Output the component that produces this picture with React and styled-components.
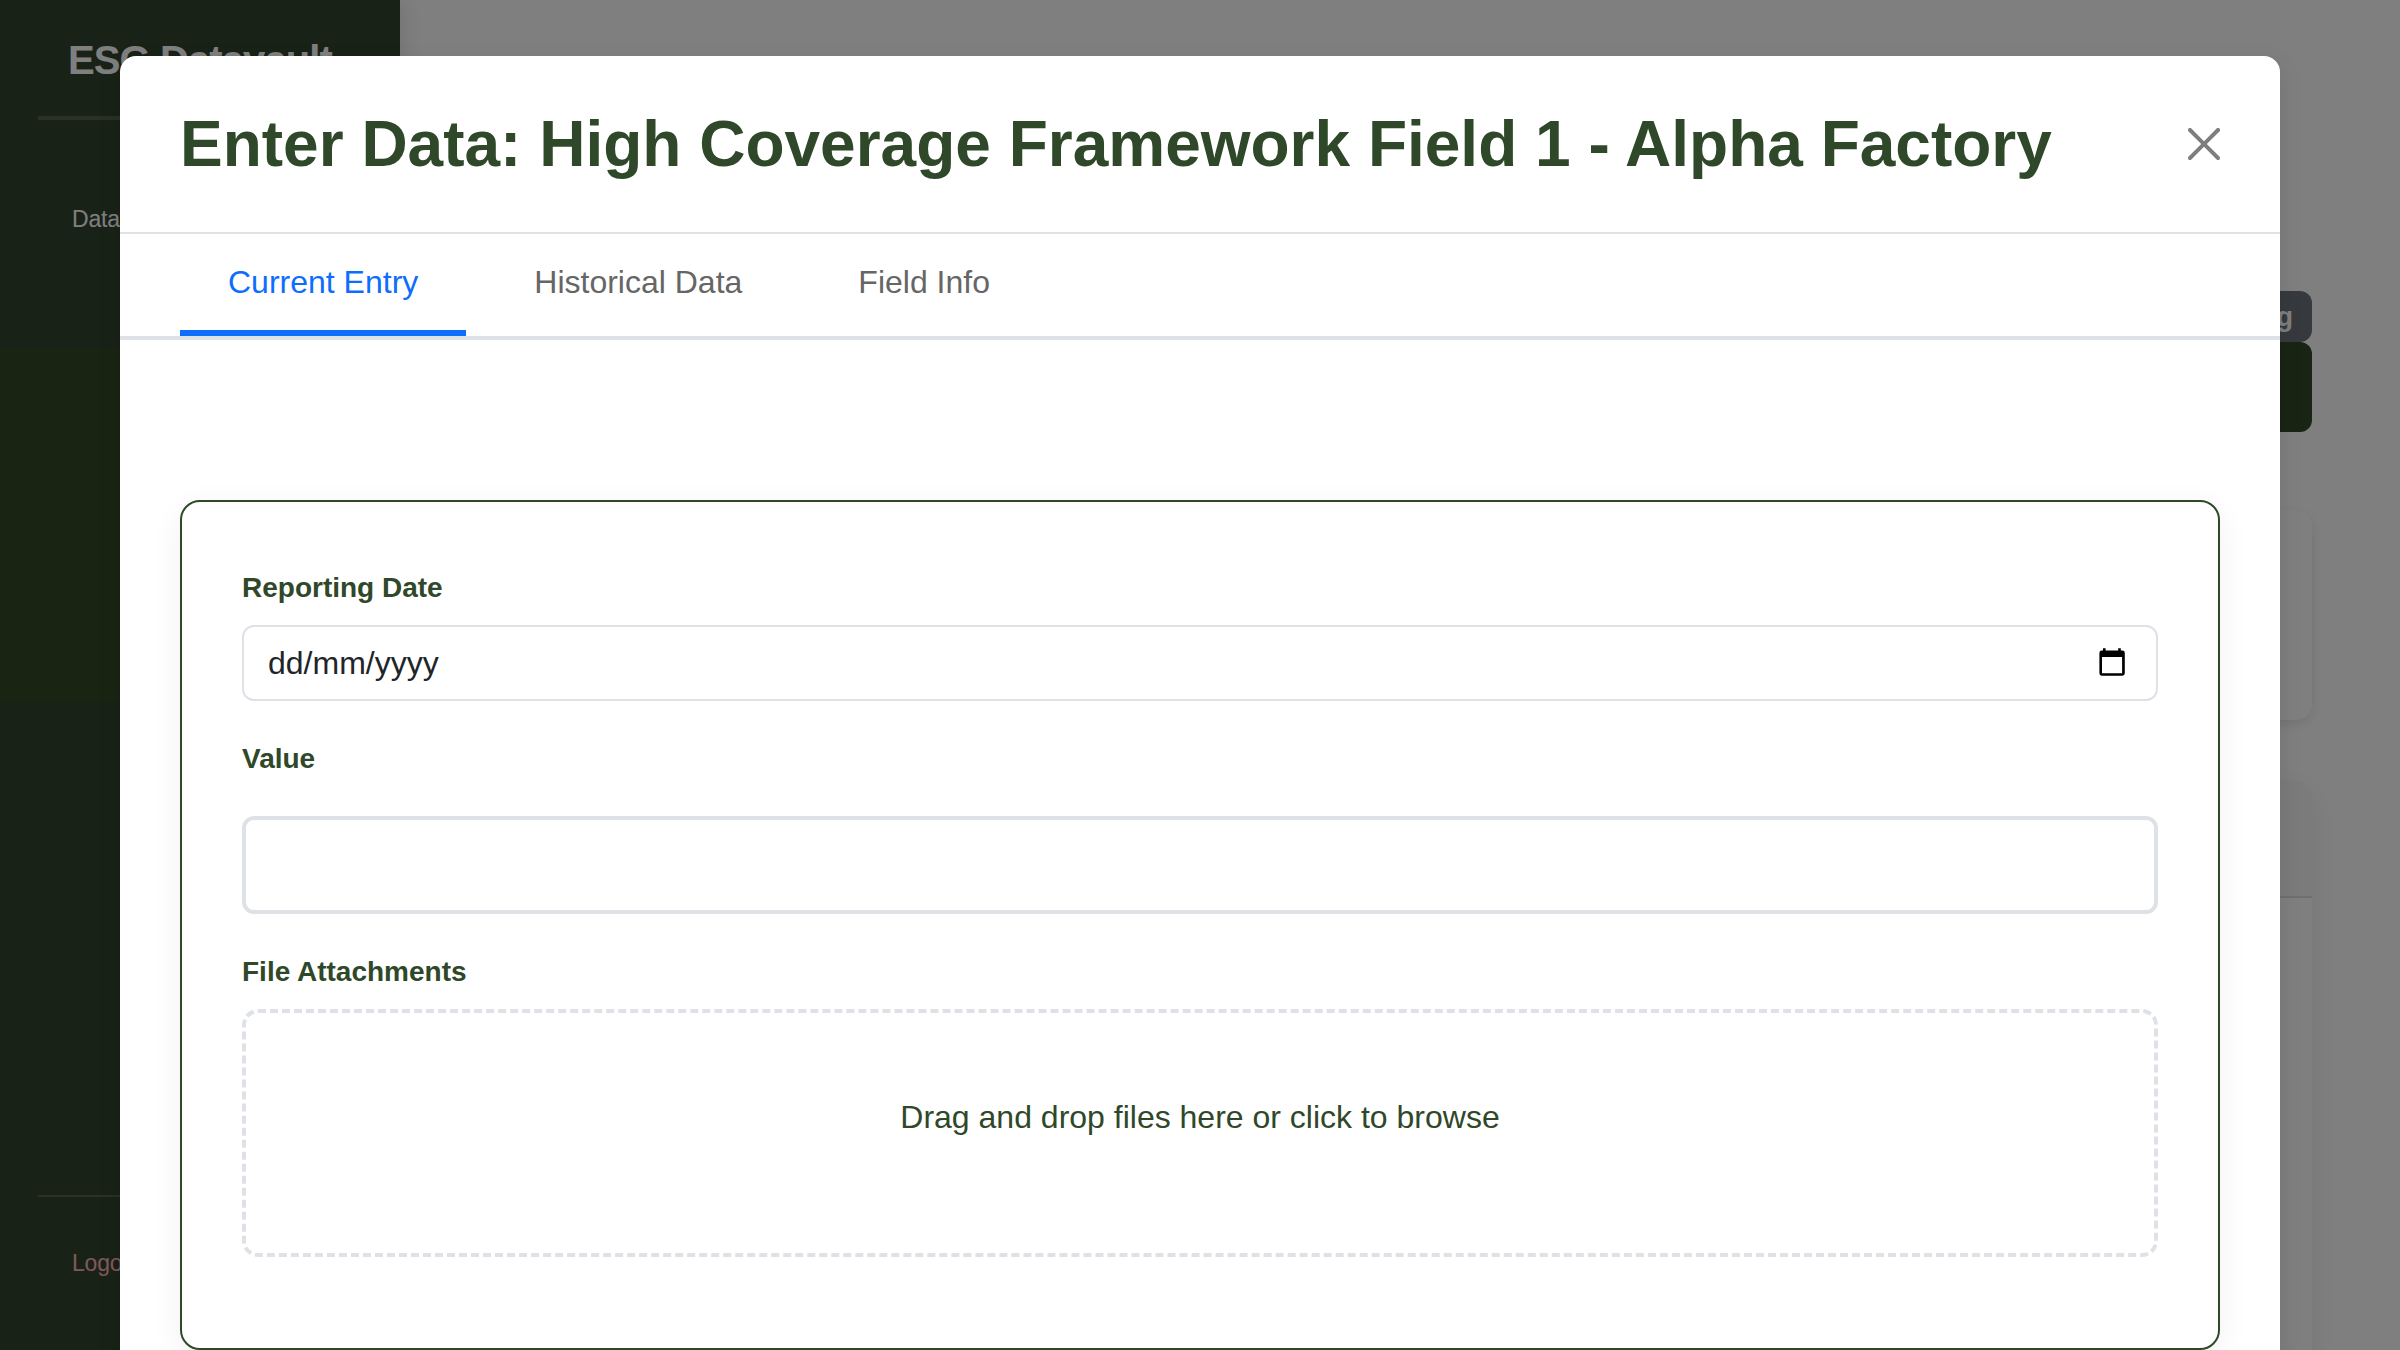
import React from 'react';
import styled, { createGlobalStyle } from 'styled-components';

const Global = createGlobalStyle`
  * { box-sizing: border-box; }
  body { margin: 0; overflow: hidden; font-family: "Liberation Sans", Arial, sans-serif; }
`;

const Page = styled.div`
  position: relative;
  display: flex;
  width: 2400px;
  height: 1350px;
  overflow: hidden;
  background: #fff;
`;

const Sidebar = styled.aside`
  display: flex;
  flex-direction: column;
  width: 400px;
  padding: 36px 38px 0;
  background: linear-gradient(#32442e 0 348px, #344826 348px 702px, #32442e 702px);
  color: #fff;
  box-shadow: 4px 0 20px rgba(0, 0, 0, 0.1);
`;

const Brand = styled.div`
  height: 84px;
  padding-left: 30px;
  border-bottom: 4px solid rgba(255, 255, 255, 0.16);
  font-size: 40px;
  font-weight: 700;
  letter-spacing: -0.9px;
  line-height: 48px;
  white-space: nowrap;
`;

const NavLink = styled.a`
  margin-top: 84px;
  padding-left: 34px;
  font-size: 23px;
  letter-spacing: -0.2px;
  line-height: 30px;
`;

const SidebarFooter = styled.div`
  height: 155px;
  margin-top: auto;
  padding: 51px 34px 0;
  border-top: 2px solid rgba(255, 255, 255, 0.16);
  color: #ffb3b3;
  font-size: 23px;
  letter-spacing: -0.2px;
  line-height: 30px;
`;

const Main = styled.main`
  display: flex;
  flex: 1;
  flex-direction: column;
  padding: 291px 88px 0 80px;

  & > * {
    flex-shrink: 0;
  }
`;

const StatusBadge = styled.span`
  align-self: flex-end;
  height: 51px;
  padding: 12px 19px 0;
  border-radius: 12px;
  background: #6c757d;
  color: #fff;
  font-size: 27px;
  font-weight: 700;
  line-height: 28px;
`;

const ActionButton = styled.button`
  align-self: flex-end;
  width: 220px;
  height: 90px;
  border: 0;
  border-radius: 12px;
  background: #344828;
`;

const SummaryCard = styled.section`
  height: 210px;
  margin-top: 78px;
  border-radius: 16px;
  background: #fff;
  box-shadow: 0 4px 12px rgba(0, 0, 0, 0.1);
`;

const TableCard = styled.section`
  height: 700px;
  margin-top: 60px;
  border-radius: 20px;
  background: #fff;
  box-shadow: 0 8px 32px rgba(0, 0, 0, 0.07);
`;

const TableHead = styled.div`
  height: 118px;
  border-bottom: 2px solid #dedede;
  border-radius: 20px 20px 0 0;
  background: #f7f7f7;
`;

const Backdrop = styled.div`
  position: absolute;
  inset: 0;
  display: flex;
  justify-content: center;
  align-items: flex-start;
  padding-top: 56px;
  background: rgba(0, 0, 0, 0.5);
`;

const Modal = styled.div`
  width: 2160px;
  height: 1400px;
  border-radius: 16px;
  background: #fff;
  box-shadow: 0 8px 24px rgba(0, 0, 0, 0.1);
`;

const ModalHeader = styled.header`
  display: flex;
  align-items: center;
  justify-content: space-between;
  height: 178px;
  padding: 0 60px;
  border-bottom: 2px solid #dee2e6;
`;

const Title = styled.h2`
  margin: 0;
  color: #2f4829;
  font-size: 64px;
  font-weight: 700;
  line-height: 76px;
  white-space: nowrap;
`;

const CloseButton = styled.button`
  display: flex;
  padding: 0;
  border: 0;
  background: none;
  opacity: 0.5;
`;

const Tabs = styled.nav`
  display: flex;
  gap: 20px;
  height: 106px;
  padding: 0 60px;
  border-bottom: 4px solid #dee2e6;
`;

const Tab = styled.button`
  padding: 24px 48px;
  border: 0;
  border-bottom: 6px solid ${(p) => (p.$active ? '#0d6efd' : 'transparent')};
  background: none;
  color: ${(p) => (p.$active ? '#0d6efd' : '#666')};
  font: 400 32px/48px "Liberation Sans", Arial, sans-serif;
`;

const FormCard = styled.form`
  display: flex;
  flex-direction: column;
  height: 850px;
  margin: 160px 60px 0;
  padding: 66px 60px 0;
  border: 2px solid #2f4829;
  border-radius: 20px;
  background: #fff;
  box-shadow: 0 8px 32px rgba(0, 0, 0, 0.06);
`;

const Label = styled.label`
  height: 40px;
  margin-top: ${(p) => p.$top || 0}px;
  color: #2f4829;
  font-size: 28px;
  font-weight: 700;
  line-height: 40px;
`;

const DateField = styled.div`
  display: flex;
  align-items: center;
  justify-content: space-between;
  height: 76px;
  margin-top: 17px;
  padding: 0 31px 0 24px;
  border: 2px solid #dee2e6;
  border-radius: 12px;
  color: #212529;
  font-size: 32px;
`;

const ValueInput = styled.input`
  height: 98px;
  margin-top: 37px;
  border: 4px solid #dee2e6;
  border-radius: 12px;
  background: #fff;
  outline: none;
`;

const DropZone = styled.div`
  height: 248px;
  margin-top: 17px;
  padding-top: 80px;
  border: 4px dashed #dee2e6;
  border-radius: 16px;
  color: #2f4829;
  font-size: 32px;
  line-height: 48px;
  text-align: center;
`;

const CalendarGlyph = styled.svg`
  margin-bottom: 2px;
`;

function CloseIcon() {
  return (
    <svg width="32" height="32" viewBox="0 0 16 16" fill="#000">
      <path d="M.293.293a1 1 0 0 1 1.414 0L8 6.586 14.293.293a1 1 0 1 1 1.414 1.414L9.414 8l6.293 6.293a1 1 0 0 1-1.414 1.414L8 9.414l-6.293 6.293a1 1 0 0 1-1.414-1.414L6.586 8 .293 1.707a1 1 0 0 1 0-1.414z" />
    </svg>
  );
}

function CalendarIcon() {
  return (
    <CalendarGlyph width="26" height="28" viewBox="0 0 26 28">
      <path
        fill="#000"
        fillRule="evenodd"
        d="M4 .2h2.600v2.400h12.600V.2h2.600v2.400h1.600a2.400 2.400 0 0 1 2.400 2.400v20.300a2.400 2.400 0 0 1-2.400 2.400H2.800a2.400 2.400 0 0 1-2.400-2.400V5a2.400 2.400 0 0 1 2.400-2.400H4zM3 9v16.300h20.100V9z"
      />
    </CalendarGlyph>
  );
}

export default function App() {
  return (
    <Page>
      <Global />
      <Sidebar>
        <Brand>ESG Datavault</Brand>
        <NavLink>Data</NavLink>
        <SidebarFooter>Logout</SidebarFooter>
      </Sidebar>
      <Main>
        <StatusBadge>Pending</StatusBadge>
        <ActionButton type="button" />
        <SummaryCard />
        <TableCard>
          <TableHead />
        </TableCard>
      </Main>
      <Backdrop>
        <Modal>
          <ModalHeader>
            <Title>Enter Data: High Coverage Framework Field 1 - Alpha Factory</Title>
            <CloseButton type="button" aria-label="Close">
              <CloseIcon />
            </CloseButton>
          </ModalHeader>
          <Tabs>
            <Tab $active>Current Entry</Tab>
            <Tab>Historical Data</Tab>
            <Tab>Field Info</Tab>
          </Tabs>
          <FormCard>
            <Label>Reporting Date</Label>
            <DateField>
              <span>dd/mm/yyyy</span>
              <CalendarIcon />
            </DateField>
            <Label $top={38}>Value</Label>
            <ValueInput />
            <Label $top={38}>File Attachments</Label>
            <DropZone>Drag and drop files here or click to browse</DropZone>
          </FormCard>
        </Modal>
      </Backdrop>
    </Page>
  );
}
